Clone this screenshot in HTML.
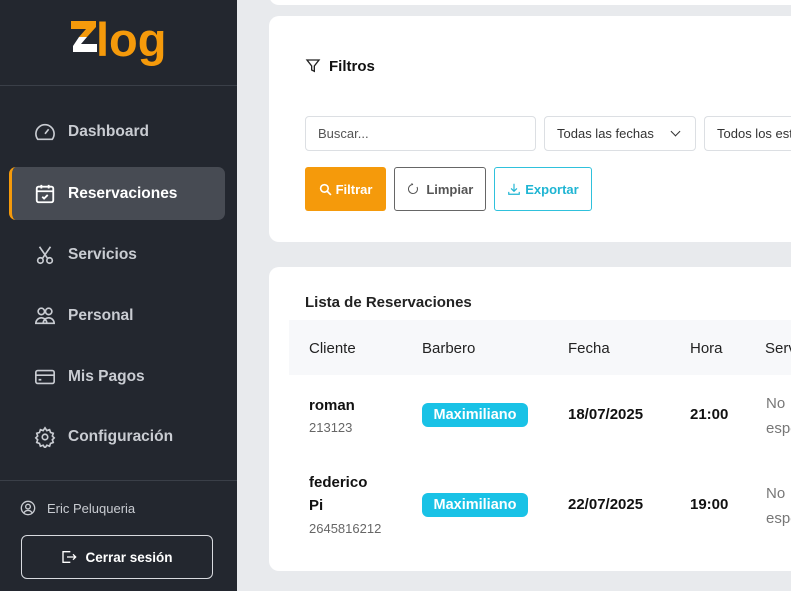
<!DOCTYPE html>
<html><head><meta charset="utf-8"><style>
*{box-sizing:border-box;margin:0;padding:0}
body{width:791px;height:591px;overflow:hidden;background:#e8eaed;font-family:"Liberation Sans",sans-serif;position:relative}
.sb{position:absolute;left:0;top:0;width:237px;height:591px;background:#23272f}
.logo{position:absolute;left:96px;top:12px;font-size:47px;font-weight:bold;color:#f59a0b;letter-spacing:0px}
.hr{position:absolute;left:0;width:237px;height:1px;background:#3a3f48}
.nav{position:absolute;left:34px;font-size:15.5px;font-weight:bold;color:#c9ccd2;display:flex;align-items:center}
.nav svg{margin-right:12px}
.act{position:absolute;left:9px;top:167px;width:216px;height:53px;background:#474b53;border-radius:7px;border-left:3px solid #f59a0b}
.card{position:absolute;left:269px;width:540px;background:#fff;border-radius:10px}
.inp{position:absolute;height:35px;border:1px solid #dcdfe3;border-radius:4px;font-size:13px;color:#333;display:flex;align-items:center;padding-left:12px;white-space:nowrap;overflow:hidden}
.btn{position:absolute;top:167px;height:44px;border-radius:3px;font-size:13px;font-weight:bold;display:flex;align-items:center;justify-content:center;gap:4px}
.th{position:absolute;top:340px;font-size:15px;color:#222}
.td{position:absolute;font-size:15px;font-weight:bold;color:#111}
.sub{font-size:13px;color:#666;font-weight:normal}
.badge{position:absolute;left:422px;width:106px;height:24px;background:#19c2e6;color:#fff;border-radius:6px;font-weight:bold;font-size:14.5px;text-align:center;line-height:24px}
.gr{position:absolute;left:766px;font-size:15px;color:#777;line-height:25px;white-space:nowrap}
</style></head><body>
<div class="sb">
<div class="logo">log</div>
<svg style="position:absolute;left:70px;top:21px" width="28" height="32" viewBox="0 0 28 32"><polygon points="1,0 26,0 26,6 17,16 9,16 16,8 1,8" fill="#f59a0b"/><polygon points="9,16 17,16 11,23 27,23 27,31 3,31 3,25" fill="#fff"/></svg>
<div class="hr" style="top:85px"></div>
<div class="act"></div>
<div class="nav" style="top:122px"><svg width="22" height="20" viewBox="0 0 24 22" fill="none" stroke="#c9ccd2" stroke-width="1.8"><path d="M4 19a10 10 0 1 1 16 0z"/><path d="M12 13l4-5"/></svg>Dashboard</div>
<div class="nav" style="top:183px;color:#fff"><svg width="22" height="22" viewBox="0 0 24 24" fill="none" stroke="#fff" stroke-width="2"><rect x="3" y="4" width="18" height="17" rx="2"/><path d="M3 9h18M8 2v4M16 2v4M9 15l2 2 4-4"/></svg>Reservaciones</div>
<div class="nav" style="top:244px"><svg width="22" height="22" viewBox="0 0 24 24" fill="none" stroke="#c9ccd2" stroke-width="1.8"><circle cx="7" cy="18" r="3"/><circle cx="17" cy="18" r="3"/><path d="M9 16L18 3M15 16L6 3"/></svg>Servicios</div>
<div class="nav" style="top:305px"><svg width="22" height="22" viewBox="0 0 24 24" fill="none" stroke="#c9ccd2" stroke-width="1.8"><circle cx="8" cy="7" r="3.5"/><circle cx="16" cy="7" r="3.5"/><path d="M2 20a6 6 0 0 1 12 0zM10 20a6 6 0 0 1 12 0z"/></svg>Personal</div>
<div class="nav" style="top:366px"><svg width="22" height="22" viewBox="0 0 24 24" fill="none" stroke="#c9ccd2" stroke-width="1.8"><rect x="2" y="5" width="20" height="14" rx="2"/><path d="M2 10h20M5 15h3"/></svg>Mis Pagos</div>
<div class="nav" style="top:426px"><svg width="22" height="22" viewBox="0 0 24 24" fill="none" stroke="#c9ccd2" stroke-width="1.8"><circle cx="12" cy="12" r="3"/><path d="M12 2l2 3 3-1 1 3 3 1-1 3 2 2-2 2 1 3-3 1-1 3-3-1-2 3-2-3-3 1-1-3-3-1 1-3-2-2 2-2-1-3 3-1 1-3 3 1z"/></svg>Configuración</div>
<div class="hr" style="top:480px"></div>
<div style="position:absolute;left:20px;top:500px;font-size:13px;color:#c9ccd2;display:flex;align-items:center"><svg width="16" height="16" viewBox="0 0 24 24" fill="none" stroke="#c9ccd2" stroke-width="2" style="margin-right:11px"><circle cx="12" cy="12" r="10"/><circle cx="12" cy="10" r="3.5"/><path d="M6 19a7 7 0 0 1 12 0"/></svg>Eric Peluqueria</div>
<div style="position:absolute;left:21px;top:535px;width:192px;height:44px;border:1px solid #d8dadf;border-radius:6px;color:#fff;font-size:13.5px;font-weight:bold;display:flex;align-items:center;justify-content:center"><svg width="16" height="14" viewBox="0 0 24 20" fill="none" stroke="#fff" stroke-width="2" style="margin-right:8px"><path d="M14 2H3v16h11M9 10h13M18 6l4 4-4 4"/></svg>Cerrar sesión</div>
</div>
<div class="card" style="top:-20px;height:25px"></div>
<div class="card" style="top:16px;height:226px"></div>
<svg style="position:absolute;left:305px;top:58px" width="16" height="16" viewBox="0 0 24 24" fill="none" stroke="#222" stroke-width="2"><path d="M3 3h18l-7 9v8l-4-2v-6z"/></svg>
<div style="position:absolute;left:329px;top:58px;font-size:15px;font-weight:bold;color:#111">Filtros</div>
<div class="inp" style="left:305px;top:116px;width:231px;color:#555">Buscar...</div>
<div class="inp" style="left:544px;top:116px;width:152px">Todas las fechas<span style="position:absolute;right:16px;top:11px;width:7px;height:7px;border-right:1.5px solid #333;border-bottom:1.5px solid #333;transform:rotate(45deg)"></span></div>
<div class="inp" style="left:704px;top:116px;width:87px;border-right:none;border-radius:4px 0 0 4px">Todos los estados</div>
<div class="btn" style="left:305px;width:81px;background:#f59a0b;color:#fff"><svg width="13" height="13" viewBox="0 0 24 24" fill="none" stroke="#fff" stroke-width="3"><circle cx="10" cy="10" r="7"/><path d="M15 15l7 7"/></svg>Filtrar</div>
<div class="btn" style="left:394px;width:92px;border:1px solid #666;color:#555"><svg width="12" height="12" viewBox="0 0 24 24" fill="none" stroke="#555" stroke-width="2"><path d="M12 3a9 9 0 1 0 8 5M12 3l-3-2"/></svg>&nbsp;Limpiar</div>
<div class="btn" style="left:494px;width:98px;border:1px solid #2fc1dc;color:#1fb5d3"><svg width="14" height="14" viewBox="0 0 24 24" fill="none" stroke="#1fb5d3" stroke-width="2"><path d="M12 3v13M7 11l5 5 5-5M3 17v4h18v-4"/></svg>Exportar</div>
<div class="card" style="top:267px;height:304px"></div>
<div style="position:absolute;left:305px;top:294px;font-size:15px;font-weight:bold;color:#222">Lista de Reservaciones</div>
<div style="position:absolute;left:289px;top:320px;width:502px;height:55px;background:#f7f8fa"></div>
<div class="th" style="left:309px">Cliente</div><div class="th" style="left:422px">Barbero</div><div class="th" style="left:568px">Fecha</div><div class="th" style="left:690px">Hora</div><div class="th" style="left:765px">Servicio</div>
<div class="td" style="left:309px;top:395px;line-height:22px">roman<br><span class="sub">213123</span></div>
<div class="badge" style="top:403px">Maximiliano</div>
<div class="td" style="left:568px;top:406px">18/07/2025</div><div class="td" style="left:690px;top:406px">21:00</div>
<div class="gr" style="top:391px">No<br>especificado</div>
<div class="td" style="left:309px;top:471px;line-height:23px">federico<br>Pi<br><span class="sub">2645816212</span></div>
<div class="badge" style="top:493px">Maximiliano</div>
<div class="td" style="left:568px;top:496px">22/07/2025</div><div class="td" style="left:690px;top:496px">19:00</div>
<div class="gr" style="top:481px">No<br>especificado</div>
</body></html>
